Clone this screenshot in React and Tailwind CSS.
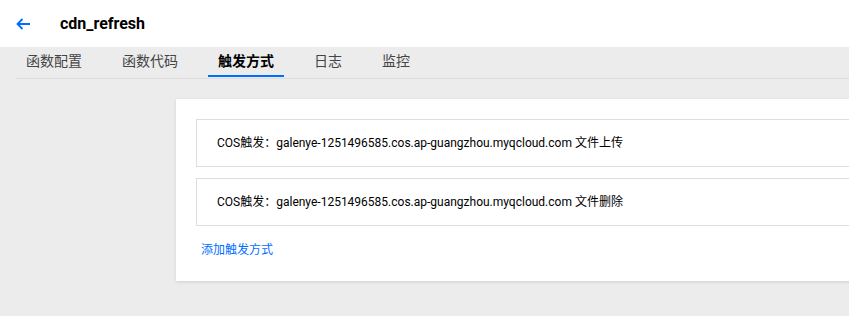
import React from 'react';

const tabs = ['函数配置', '函数代码', '触发方式', '日志', '监控'];

const triggers = [
  'COS触发：galenye-1251496585.cos.ap-guangzhou.myqcloud.com 文件上传',
  'COS触发：galenye-1251496585.cos.ap-guangzhou.myqcloud.com 文件删除',
];

const App = () => {
  return (
    <div
      className="w-[849px] h-[316px] overflow-hidden bg-[#ececec]"
      style={{ fontFamily: 'Roboto, "Noto Sans CJK SC", sans-serif' }}
    >
      {/* Header */}
      <div className="h-[47px] bg-white flex items-center">
        <svg className="ml-[16px] w-[15px] h-[12px]" viewBox="0 0 15 12" fill="none">
          <path d="M14 6H2M6.5 1L1.5 6l5 5" stroke="#006eff" strokeWidth="1.8" />
        </svg>
        <h1 className="ml-[29px] text-[16px] font-bold text-[#000]">cdn_refresh</h1>
      </div>

      {/* Tabs */}
      <div className="ml-[16px] border-b border-[#dddddd] flex gap-[20px] h-[32px]">
        {tabs.map((t) => (
          <div
            key={t}
            className={
              t === '触发方式'
                ? 'px-[10px] pt-[4px] text-[14px] font-bold text-black border-b-2 border-[#006eff] h-[30px]'
                : 'px-[10px] pt-[4px] text-[14px] text-[#444]'
            }
          >
            {t}
          </div>
        ))}
      </div>

      {/* Card */}
      <div className="ml-[176px] mt-[20px] w-[700px] bg-white shadow-[0_1px_3px_rgba(0,0,0,0.12)] px-[20px] pt-[20px] pb-[22px]">
        <div className="flex flex-col gap-[11px]">
          {triggers.map((t) => (
            <div
              key={t}
              className="h-[48px] border border-[#dddddd] flex items-center pl-[20px] text-[12px] text-[#000] whitespace-nowrap"
            >
              {t}
            </div>
          ))}
        </div>
        <div className="mt-[15px] ml-[5px] text-[12px] text-[#006eff] leading-[18px]">添加触发方式</div>
      </div>
    </div>
  );
};

export default App;
